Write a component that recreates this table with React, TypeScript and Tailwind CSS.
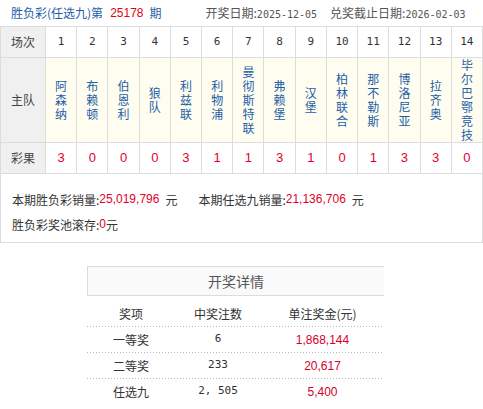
import React from "react";

const cjk = "font-['Noto_Sans_CJK_SC',sans-serif]";
const mono = "font-['DejaVu_Sans_Mono','Noto_Sans_CJK_SC',monospace]";
const arial = "font-['Liberation_Sans',Arial,sans-serif]";

const teams = [
  "阿森纳",
  "布赖顿",
  "伯恩利",
  "狼队",
  "利兹联",
  "利物浦",
  "曼彻斯特联",
  "弗赖堡",
  "汉堡",
  "柏林联合",
  "那不勒斯",
  "博洛尼亚",
  "拉齐奥",
  "毕尔巴鄂竞技",
];

const results = ["3", "0", "0", "0", "3", "1", "1", "3", "1", "0", "1", "3", "3", "0"];

const prizes = [
  { name: "一等奖", count: "6", money: "1,868,144" },
  { name: "二等奖", count: "233", money: "20,617" },
  { name: "任选九", count: "2, 505", money: "5,400" },
];

const cell = "border-r border-b border-[#dcdcdc] flex items-center justify-center";

function DottedLine() {
  return <div className="h-px w-full bg-[linear-gradient(to_right,#b8b8b8_1px,transparent_1px)] bg-[length:3px_1px] bg-repeat-x" />;
}

export default function App() {
  return (
    <div className={`w-[483px] h-[409px] bg-white ${cjk} text-[12px] text-[#333] overflow-hidden`}>
      <div className="flex items-center h-[26px] pl-[11px] whitespace-nowrap">
        <span className="text-[#1d5ea8]">胜负彩(任选九)第</span>
        <span className={`${arial} text-[#e60012] ml-[7px] mr-[6px]`}>25178</span>
        <span className="text-[#1d5ea8]">期</span>
        <span className="ml-[44px] text-[#555]">
          开奖日期:<span className={mono + " text-[10px]"}>2025-12-05</span>
        </span>
        <span className="ml-[13px] text-[#555]">
          兑奖截止日期:<span className={mono + " text-[10px]"}>2026-02-03</span>
        </span>
      </div>

      <div className="grid grid-cols-[45px_repeat(14,minmax(0,1fr))] border-l border-t border-[#dcdcdc]">
        <div className={`${cell} h-[31px] bg-[#f0f0f0] text-[#444]`}>场次</div>
        {teams.map((_, i) => (
          <div key={i} className={`${cell} h-[31px] ${mono} text-[11px] text-[#333]`}>
            {i + 1}
          </div>
        ))}

        <div className={`${cell} h-[85px] bg-[#f0f0f0] text-[#444]`}>主队</div>
        {teams.map((t) => (
          <div key={t} className={`${cell} h-[85px] bg-[#fffdf0]`}>
            <span className="block w-[12px] break-all text-center text-[#1d5ea8] leading-[14px]">{t}</span>
          </div>
        ))}

        <div className={`${cell} h-[31px] bg-[#f0f0f0] text-[#444]`}>彩果</div>
        {results.map((r, i) => (
          <div key={i} className={`${cell} h-[31px] ${arial} text-[13px] text-[#e2002a]`}>
            {r}
          </div>
        ))}
      </div>

      <div className="h-[69px] border-l border-r border-b border-[#dcdcdc] pl-[11px] pt-[13px] leading-[25px] text-[#333]">
        <div className="flex whitespace-nowrap">
          <span>本期胜负彩销量:</span>
          <span className={`${arial} text-[#e2002a]`}>25,019,796</span>
          <span className="ml-[6px]">元</span>
          <span className="ml-[21px]">本期任选九销量:</span>
          <span className={`${arial} text-[#e2002a]`}>21,136,706</span>
          <span className="ml-[6px]">元</span>
        </div>
        <div className="flex whitespace-nowrap">
          <span>胜负彩奖池滚存:</span>
          <span className={`${arial} text-[#e2002a]`}>0</span>
          <span>元</span>
        </div>
      </div>

      <div className="ml-[87px] mt-[23px] w-[297px]">
        <div className="h-[30px] border-l border-t border-b border-[#dcdcdc] bg-[#fafafa] flex items-center justify-center text-[14px] text-[#555]">
          开奖详情
        </div>
        <div className="grid grid-cols-[88px_86px_1fr] h-[30px] items-center text-center text-[#333] pt-[5px]">
          <span>奖项</span>
          <span>中奖注数</span>
          <span>单注奖金(元)</span>
        </div>
        {prizes.map((p) => (
          <div key={p.name}>
            <DottedLine />
            <div className="grid grid-cols-[88px_86px_1fr] h-[25px] items-center text-center">
              <span className="text-[#333]">{p.name}</span>
              <span className={`${mono} text-[11px] text-[#333]`}>{p.count}</span>
              <span className={`${arial} text-[#d4002a]`}>{p.money}</span>
            </div>
          </div>
        ))}
      </div>
    </div>
  );
}
